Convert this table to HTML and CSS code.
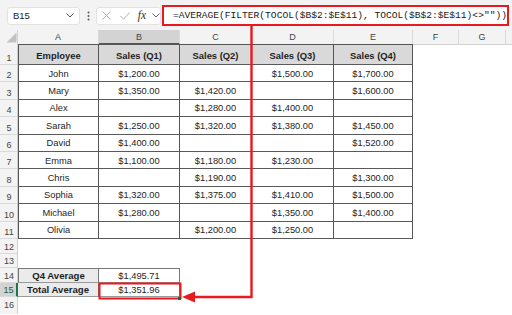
FILE: index.html
```html
<!DOCTYPE html>
<html>
<head>
<meta charset="utf-8">
<link rel="stylesheet" href="styles.css">
</head>
<body>
<div class="app">
  <div class="toolbar">
    <div class="namebox"><span>B15</span>
      <svg class="chev" width="8" height="5" viewBox="0 0 8 5"><path d="M0.5 0.5 L4 4 L7.5 0.5" fill="none" stroke="#555" stroke-width="1"/></svg>
    </div>
    <div class="dots">
      <svg width="3" height="10" viewBox="0 0 3 10"><circle cx="1.5" cy="1.5" r="1" fill="#555"/><circle cx="1.5" cy="5" r="1" fill="#555"/><circle cx="1.5" cy="8.5" r="1" fill="#555"/></svg>
    </div>
    <div class="fxbox">
      <span class="ico"><svg width="9" height="9" viewBox="0 0 9 9"><path d="M0.5 0.5 L8.5 8.5 M8.5 0.5 L0.5 8.5" stroke="#a8a8a8" stroke-width="0.9" fill="none"/></svg></span>
      <span class="ico"><svg width="10" height="8" viewBox="0 0 10 8"><path d="M0.5 4 L3.6 7.2 L9.5 0.5" stroke="#a8a8a8" stroke-width="0.9" fill="none"/></svg></span>
      <span class="ico fx">fx</span>
      <span class="ico"><svg width="8" height="5" viewBox="0 0 8 5"><path d="M0.5 0.5 L4 4 L7.5 0.5" fill="none" stroke="#666" stroke-width="1"/></svg></span>
    </div>
    <div class="formula">=AVERAGE(FILTER(TOCOL($B$2:$E$11), TOCOL($B$2:$E$11)&lt;&gt;""))</div>
  </div>

  <div class="sheet">
    <div class="row hdr">
      <div class="corner"><svg width="18" height="14" viewBox="0 0 18 14"><polygon points="16.5,2.5 16.5,12.5 6.5,12.5" fill="#c2c2c2"/></svg></div>
      <div class="ch">A</div><div class="ch sel">B</div><div class="ch">C</div><div class="ch">D</div><div class="ch">E</div><div class="ch">F</div><div class="ch">G</div><div class="ch end"></div>
    </div>

    <div class="row r1">
      <div class="rh">1</div>
      <div class="c t tl th">Employee</div><div class="c t th">Sales (Q1)</div><div class="c t th">Sales (Q2)</div><div class="c t th">Sales (Q3)</div><div class="c t th">Sales (Q4)</div><div class="c"></div><div class="c"></div><div class="c"></div>
    </div>
    <div class="row rd">
      <div class="rh">2</div>
      <div class="c t tl">John</div><div class="c t">$1,200.00</div><div class="c t"></div><div class="c t">$1,500.00</div><div class="c t">$1,700.00</div><div class="c"></div><div class="c"></div><div class="c"></div>
    </div>
    <div class="row rd">
      <div class="rh">3</div>
      <div class="c t tl">Mary</div><div class="c t">$1,350.00</div><div class="c t">$1,420.00</div><div class="c t"></div><div class="c t">$1,600.00</div><div class="c"></div><div class="c"></div><div class="c"></div>
    </div>
    <div class="row rd">
      <div class="rh">4</div>
      <div class="c t tl">Alex</div><div class="c t"></div><div class="c t">$1,280.00</div><div class="c t">$1,400.00</div><div class="c t"></div><div class="c"></div><div class="c"></div><div class="c"></div>
    </div>
    <div class="row rd">
      <div class="rh">5</div>
      <div class="c t tl">Sarah</div><div class="c t">$1,250.00</div><div class="c t">$1,320.00</div><div class="c t">$1,380.00</div><div class="c t">$1,450.00</div><div class="c"></div><div class="c"></div><div class="c"></div>
    </div>
    <div class="row rd">
      <div class="rh">6</div>
      <div class="c t tl">David</div><div class="c t">$1,400.00</div><div class="c t"></div><div class="c t"></div><div class="c t">$1,520.00</div><div class="c"></div><div class="c"></div><div class="c"></div>
    </div>
    <div class="row rd">
      <div class="rh">7</div>
      <div class="c t tl">Emma</div><div class="c t">$1,100.00</div><div class="c t">$1,180.00</div><div class="c t">$1,230.00</div><div class="c t"></div><div class="c"></div><div class="c"></div><div class="c"></div>
    </div>
    <div class="row rd">
      <div class="rh">8</div>
      <div class="c t tl">Chris</div><div class="c t"></div><div class="c t">$1,190.00</div><div class="c t"></div><div class="c t">$1,300.00</div><div class="c"></div><div class="c"></div><div class="c"></div>
    </div>
    <div class="row rd">
      <div class="rh">9</div>
      <div class="c t tl">Sophia</div><div class="c t">$1,320.00</div><div class="c t">$1,375.00</div><div class="c t">$1,410.00</div><div class="c t">$1,500.00</div><div class="c"></div><div class="c"></div><div class="c"></div>
    </div>
    <div class="row rd">
      <div class="rh">10</div>
      <div class="c t tl">Michael</div><div class="c t">$1,280.00</div><div class="c t"></div><div class="c t">$1,350.00</div><div class="c t">$1,400.00</div><div class="c"></div><div class="c"></div><div class="c"></div>
    </div>
    <div class="row rd">
      <div class="rh">11</div>
      <div class="c t tl">Olivia</div><div class="c t"></div><div class="c t">$1,200.00</div><div class="c t">$1,250.00</div><div class="c t"></div><div class="c"></div><div class="c"></div><div class="c"></div>
    </div>
    <div class="row re">
      <div class="rh">12</div>
      <div class="c"></div><div class="c"></div><div class="c"></div><div class="c"></div><div class="c"></div><div class="c"></div><div class="c"></div><div class="c"></div>
    </div>
    <div class="row re">
      <div class="rh">13</div>
      <div class="c"></div><div class="c"></div><div class="c"></div><div class="c"></div><div class="c"></div><div class="c"></div><div class="c"></div><div class="c"></div>
    </div>
    <div class="row re">
      <div class="rh">14</div>
      <div class="c s sl st lab">Q4 Average</div><div class="c s st">$1,495.71</div><div class="c"></div><div class="c"></div><div class="c"></div><div class="c"></div><div class="c"></div><div class="c"></div>
    </div>
    <div class="row re">
      <div class="rh rsel">15</div>
      <div class="c s lab">Total Average</div><div class="c s">$1,351.96</div><div class="c"></div><div class="c"></div><div class="c"></div><div class="c"></div><div class="c"></div><div class="c"></div>
    </div>
    <div class="row rlast">
      <div class="rh">16</div>
      <div class="c"></div><div class="c"></div><div class="c"></div><div class="c"></div><div class="c"></div><div class="c"></div><div class="c"></div><div class="c"></div>
    </div>
  </div>

  <svg class="annot" width="512" height="315" viewBox="0 0 512 315">
    <rect x="99.5" y="283.5" width="81" height="15" fill="none" stroke="#e8191f" stroke-width="2"/>
    <rect x="178" y="297" width="3" height="3" fill="#2d5d3f"/>
    <path d="M251.5 26 L251.5 297 L193 297" fill="none" stroke="#e8191f" stroke-width="2.4"/>
    <polygon points="182,297 195,291.5 195,302.5" fill="#e8191f"/>
  </svg>
</div>
</body>
</html>
```
FILE: styles.css
```css
* { box-sizing: border-box; }
body {
  margin: 0;
  background: #fff;
  font-family: "Liberation Sans", Arial, sans-serif;
}
.app {
  position: relative;
  width: 512px;
  height: 315px;
  overflow: hidden;
  background: #fff;
}
.toolbar {
  height: 30px;
  background: #f3f3f3;
  display: flex;
  align-items: center;
  padding: 1px 0 0 7px;
}
.namebox {
  width: 73px;
  height: 18px;
  background: #fff;
  border: 1px solid #e2e2e2;
  border-radius: 3px;
  display: flex;
  align-items: center;
  justify-content: space-between;
  padding: 0 5px 0 5px;
  font-size: 9.5px;
  color: #222;
}
.chev { display: block; }
.dots {
  width: 16px;
  display: flex;
  justify-content: center;
  align-items: center;
}
.dots svg { display: block; }
.fxbox {
  width: 65px;
  height: 18px;
  background: #fff;
  border: 1px solid #e2e2e2;
  border-radius: 3px;
  display: grid;
  grid-template-columns: 18px 19px 16px 11px;
  align-items: center;
  justify-items: center;
}
.ico { display: flex; align-items: center; justify-content: center; }
.ico svg { display: block; }
.fx {
  font-family: "Liberation Serif", "Times New Roman", serif;
  font-style: italic;
  font-size: 11.5px;
  color: #333;
  line-height: 1;
}
.formula {
  margin-left: 1px;
  width: 347px;
  height: 21px;
  border: 2px solid #e8191f;
  background: #fff;
  font-family: "Liberation Mono", "Courier New", monospace;
  font-size: 9.6px;
  color: #1a1a1a;
  display: flex;
  align-items: center;
  padding-left: 9px;
  white-space: nowrap;
  overflow: visible;
}

.row {
  display: grid;
  grid-template-columns: 18px 81px 81px 72px 82px 79px 46px 47px 6px;
}
.hdr { height: 14px; }
.r1 { height: 21px; }
.rd { height: 17.4px; }
.re { height: 14.6px; }
.rlast { height: 17px; }

.corner {
  background: #f3f3f3;
  border-right: 1px solid #d4d4d4;
  border-bottom: 1px solid #d4d4d4;
}
.corner svg { display: block; }
.ch {
  background: #f3f3f3;
  border-right: 1px solid #dadada;
  border-bottom: 1px solid #d0d0d0;
  font-size: 9px;
  color: #444;
  display: flex;
  align-items: center;
  justify-content: center;
}
.ch.sel {
  background: #d3d3d3;
  border-bottom: 2px solid #217346;
}
.ch.end { border-right: none; }

.rh {
  background: #f3f3f3;
  border-right: 1px solid #d0d0d0;
  border-bottom: 1px solid #dadada;
  font-size: 9px;
  color: #444;
  display: flex;
  align-items: flex-end;
  justify-content: center;
  padding: 0 0 1px 1px;
  line-height: 10px;
}
.rlast .rh {
  align-items: flex-start;
  padding-top: 3px;
  border-bottom: none;
}
.rh.rsel {
  background: #d3d3d3;
  border-right: 2px solid #217346;
  color: #1d5c38;
}

.c {
  display: flex;
  align-items: center;
  justify-content: center;
  font-size: 9.3px;
  color: #1e1e1e;
  white-space: nowrap;
  padding-top: 1px;
}
.t {
  border-right: 1px solid #555;
  border-bottom: 1px solid #5a5a5a;
}
.tl { border-left: 1px solid #555; }
.th {
  background: #d9d9d9;
  font-weight: bold;
  font-size: 9.4px;
  border-top: 1px solid #555;
}
.s {
  border-right: 1px solid #777;
  border-bottom: 1px solid #9a9a9a;
}
.sl { border-left: 1px solid #777; }
.st { border-top: 1px solid #777; }
.lab {
  background: #ebebeb;
  font-weight: bold;
  font-size: 9.6px;
}

.annot {
  position: absolute;
  left: 0;
  top: 0;
  pointer-events: none;
}
```
